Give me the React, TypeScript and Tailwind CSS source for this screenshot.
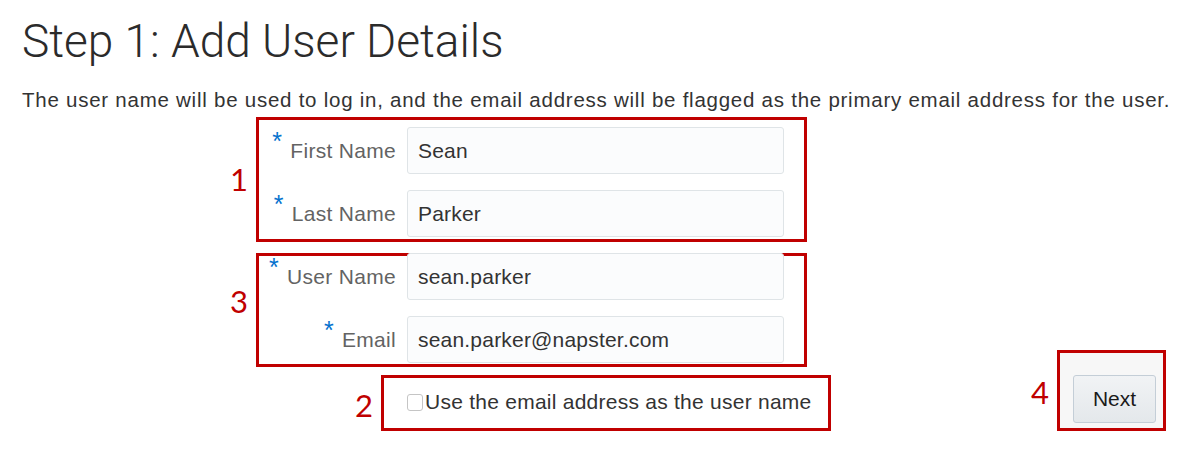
import React from "react";

const fields1 = [
  { label: "First Name", value: "Sean" },
  { label: "Last Name", value: "Parker" },
];

function Field({ label, value, first }: { label: string; value: string; first?: boolean }) {
  return (
    <div className={`flex items-center ${first ? "" : "mt-4"}`}>
      <div className="w-[148px] flex justify-end items-start pr-[11px] text-[21px] tracking-[0.3px] text-[#636363]">
        <span className="text-[#0572ce] text-[25px] leading-none -mt-[6px] mr-[8px]">*</span>
        <span>{label}</span>
      </div>
      <div className="w-[377px] h-[47px] flex items-center rounded-[3px] border border-[#dfe4e7] bg-[#fbfcfd] px-[10px] text-[21px] tracking-[0.2px] text-[#333]">
        {value}
      </div>
    </div>
  );
}

export default function App() {
  return (
    <div className="w-[1184px] h-[454px] bg-white font-['Liberation_Sans',Arial,sans-serif] overflow-hidden">
      <div className="pl-[22px] pt-[15px]">
        <h1 className="font-['Roboto',sans-serif] font-light text-[46px] leading-[52px] text-[#2b2b2b]">
          Step 1: Add User Details
        </h1>
        <p className="mt-[21px] text-[20.5px] leading-[24px] tracking-[0.75px] text-[#333] whitespace-nowrap">
          The user name will be used to log in, and the email address will be flagged as the primary email address for the user.
        </p>
      </div>

      <div className="mt-[5px] flex items-end">
        {/* left column of annotated groups */}
        <div className="ml-[256px] flex flex-col">
          <div className="relative w-[551px] border-[3px] border-[#c00000] pt-[7px] pb-[2px]">
            <span className="absolute -left-[29px] top-[44px] font-['Lato',sans-serif] text-[31px] leading-none text-[#c00000]">1</span>
            {fields1.map((f, i) => (
              <Field key={f.label} label={f.label} value={f.value} first={i === 0} />
            ))}
          </div>

          <div className="relative mt-[11px] w-[551px] border-[3px] border-[#c00000] pb-[1px]">
            <span className="absolute -left-[29px] top-[30px] font-['Lato',sans-serif] text-[31px] leading-none text-[#c00000]">3</span>
            <div className="-mt-[3px]">
              <Field label="User Name" value="sean.parker" first />
              <Field label="Email" value="sean.parker@napster.com" />
            </div>
          </div>

          <div className="relative ml-[125px] mt-[8px] w-[450px] h-[56px] border-[3px] border-[#c00000] flex items-center pl-[23px] pb-[2px]">
            <span className="absolute -left-[29px] top-[12px] font-['Lato',sans-serif] text-[31px] leading-none text-[#c00000]">2</span>
            <span className="w-[16px] h-[17px] rounded-[3px] border border-[#c5c5c5] bg-white" />
            <span className="ml-[2px] text-[21px] tracking-[0.25px] text-[#333]">Use the email address as the user name</span>
          </div>
        </div>

        <div className="relative ml-[226px] w-[109px] h-[81px] border-[3px] border-[#c00000] bg-[#f7f7f7] pl-[13px] pt-[22px]">
          <span className="absolute -left-[29px] top-[24px] font-['Lato',sans-serif] text-[31px] leading-none text-[#c00000]">4</span>
          <button className="w-[83px] h-[48px] rounded-[3px] border border-[#c4ced7] bg-gradient-to-b from-[#f1f3f5] to-[#e4e8eb] text-[21px] text-[#1a1a1a]">
            Next
          </button>
        </div>
      </div>
    </div>
  );
}
